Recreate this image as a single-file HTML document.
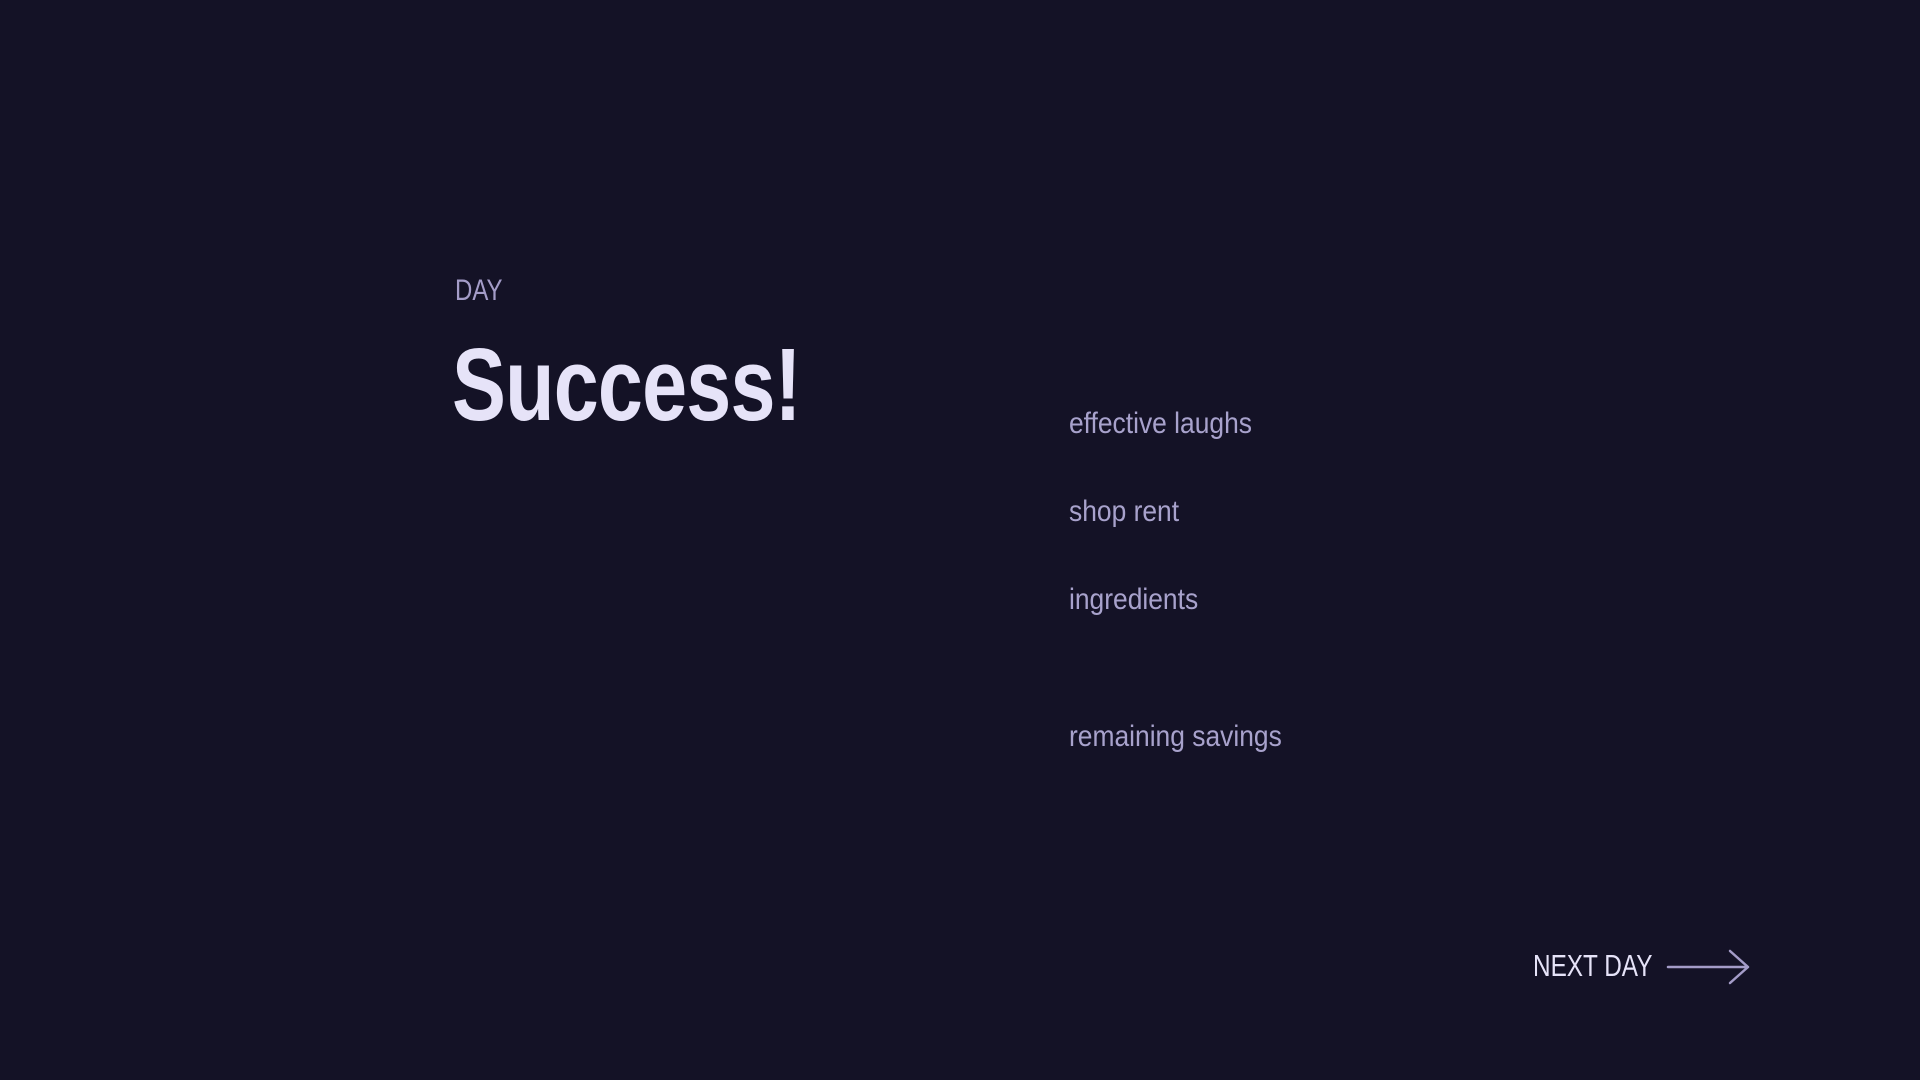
<!DOCTYPE html>
<html><head><meta charset="utf-8"><style>
html,body{margin:0;padding:0;background:#141226;width:1920px;height:1080px;overflow:hidden}
.t{position:absolute;font-family:"Liberation Sans",sans-serif;white-space:nowrap;transform-origin:0 0;line-height:1}
.day{left:455px;top:276px;font-size:30px;color:#a49cc8;transform:scaleX(0.8)}
.h{left:452px;top:333px;font-size:103px;font-weight:bold;color:#e6e3f8;transform:scaleX(0.785);letter-spacing:-1px}
.i{left:1069px;font-size:30px;color:#a8a2cc;transform:scaleX(0.88)}
.nd{left:1533px;top:950px;font-size:31px;color:#e6e3f8;transform:scaleX(0.785)}
</style></head><body>
<div class="t day">DAY</div>
<div class="t h">Success!</div>
<div class="t i" style="top:409px">effective laughs</div>
<div class="t i" style="top:497px">shop rent</div>
<div class="t i" style="top:585px">ingredients</div>
<div class="t i" style="top:722px">remaining savings</div>
<div class="t nd">NEXT DAY</div>
<svg style="position:absolute;left:1664px;top:948px" width="90" height="38" viewBox="0 0 90 38">
<path d="M4 19 H84 M66 3 L84 19 L66 35" fill="none" stroke="#a49cc8" stroke-width="2.5" stroke-linecap="round" stroke-linejoin="round"/>
</svg>
</body></html>
